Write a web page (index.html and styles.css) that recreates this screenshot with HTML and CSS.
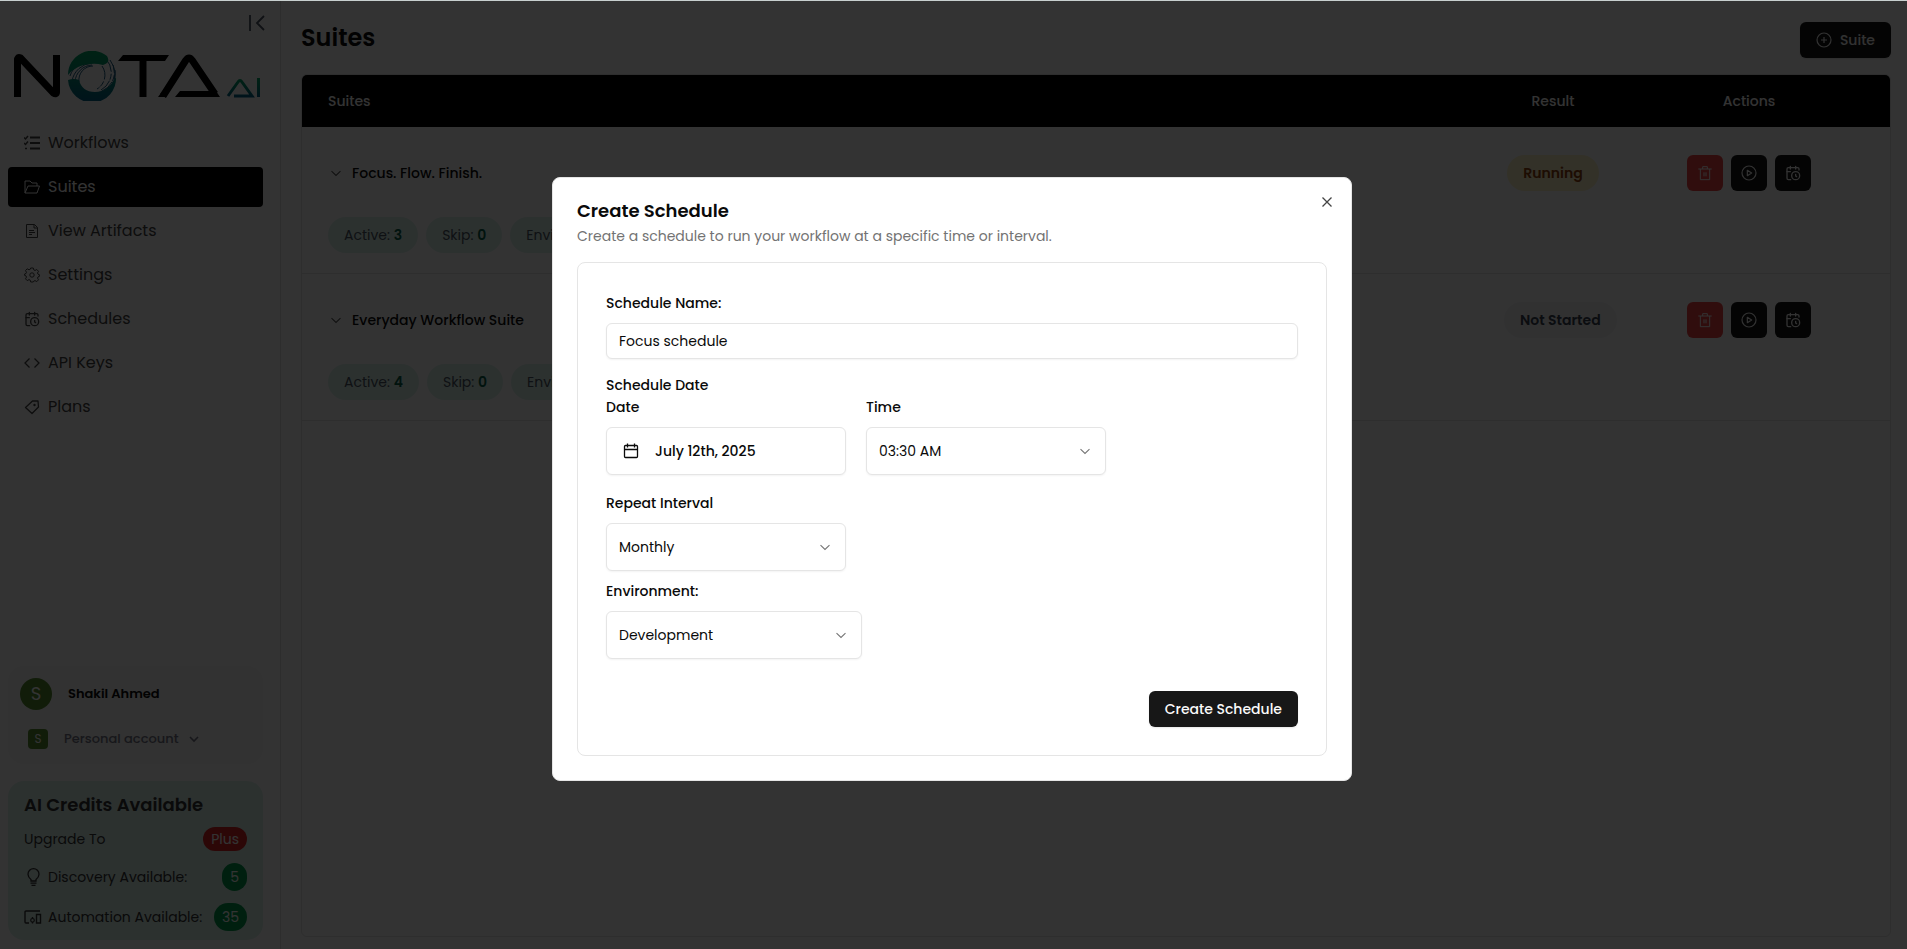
FILE: index.html
```html
<!doctype html>
<html lang="en">
	<head>
		<meta charset="utf-8" />
		<title>Suites</title>
		<link rel="stylesheet" href="styles.css">
	</head>

	<body>
		<!-- shared icons -->
		<svg class="sprite" aria-hidden="true">
			<symbol id="i-chevron" viewBox="0 0 15 15">
				<path d="M3.3 5.8 7.5 9.8 11.7 5.8" fill="none" stroke="currentColor" />
			</symbol>
			<symbol id="i-calendar-clock" viewBox="0 0 24 24">
				<g fill="none" stroke="currentColor" stroke-width="2" stroke-linecap="round" stroke-linejoin="round">
					<path d="M21 7.5V6a2 2 0 0 0-2-2H5a2 2 0 0 0-2 2v14a2 2 0 0 0 2 2h3.5" />
					<path d="M16 2v4M8 2v4M3 10h5M17.500 17.500 16 16.300V14" />
					<circle cx="16" cy="16" r="6" />
				</g>
			</symbol>
			<symbol id="i-trash" viewBox="0 0 24 24">
				<path d="M2 6h20M5 6v16h14V6M8.500 6V2.500h7V6M10.500 11v6M13.500 11v6" fill="none" stroke="currentColor" stroke-width="1.500" stroke-linejoin="round" />
			</symbol>
			<symbol id="i-play" viewBox="0 0 24 24">
				<g fill="none" stroke="currentColor" stroke-width="1.800" stroke-linejoin="round">
					<circle cx="12" cy="12" r="10.500" />
					<path d="m9.500 8 6.500 4-6.500 4z" />
				</g>
			</symbol>
		</svg>

		<div class="app">
			<aside class="sidebar">
				<button class="collapse" aria-label="Collapse sidebar">
					<svg width="16" height="16" viewBox="0 0 16 16"><path d="M1 0v16M15 1 8 8l7 7" fill="none" stroke="currentColor" stroke-width="1.800" /></svg>
				</button>

				<svg class="logo" viewBox="0 0 246 50" role="img" aria-label="Nota AI">
					<defs>
						<linearGradient id="ring" x1="0" y1="0" x2="0" y2="1">
							<stop offset="0" stop-color="#00a866" />
							<stop offset="0.4" stop-color="#009070" />
							<stop offset="1" stop-color="#006088" />
						</linearGradient>
					</defs>
					<g fill="none" stroke="#000" stroke-width="7" stroke-linejoin="round">
						<path d="M3.500 46V8q1-2 3-1l33 35q3 2 3-1V4" />
						<path d="M129 8v38" />
						<path d="M149 45 172 9q3-4 6 0l23 34" />
					</g>
					<path d="M104 10l5-6h46l-4 6zM144 46h8l2-4h-7zM161 46l5-6h36l4 6z" fill="#000" />
					<g fill="none" stroke="#1c5c80" stroke-width="1">
						<path d="M58 30a22 22 0 0 1 20-18M61 31a18 18 0 0 1 17-17M56 25a20 20 0 0 1 10-12M65 31a14 14 0 0 1 14-16" />
						<path d="M96 9a20 20 0 0 1-8 31M92 8a20 20 0 0 1-5 31M99 14a20 20 0 0 1-8 26M88 15a16 16 0 0 1-5 23" stroke-dasharray="14 2 6 1" />
						<path d="M101 19a20 20 0 0 1-8 20" />
					</g>
					<path d="M54 24A24 24 0 0 1 93 5q4 7-4 9-7-2-13-1-14 1-22 11zM102 26A24 24 0 0 1 54 29q6-2 11 0 3 12 16 12 13 0 21-15z" fill="url(#ring)" />
					<path d="M214 45l10-14q2-3 4 0l10 14h-18M244.500 27v19" fill="none" stroke="url(#ring)" stroke-width="3" />
				</svg>

				<nav class="menu">
					<a href="#">
						<svg viewBox="0 0 16 16"><path d="M6 2.500h10M6 8h10M6 13.500h10" stroke="currentColor" stroke-width="1.800" /><path d="m0 2.500 1.500 1.500L4 1M0 8l1.500 1.500L4 6.500M1 13.500h2" fill="none" stroke="currentColor" stroke-width="1.500" /></svg>
						Workflows
					</a>
					<a href="#" class="active">
						<svg viewBox="0 0 16 16"><path d="M1 14V2h5l2 2h5v3M1 14l3-7h11.500L13 14z" fill="none" stroke="currentColor" stroke-linejoin="round" /></svg>
						Suites
					</a>
					<a href="#">
						<svg viewBox="0 0 16 16"><path d="M2.500 1.500h8l3 3v10h-11zM10 1.500V5h3.500M5 7.500h5M5 9.500h6M5 11.500h3" fill="none" stroke="currentColor" stroke-linejoin="round" /></svg>
						View Artifacts
					</a>
					<a href="#">
						<svg viewBox="0 0 16 16"><path d="M6.700 1h2.600l.5 1.900 1.200.6 1.800-1 1.700 1.800-1 1.700.5 1.200 1.400.5v1.700l-1.400.5-.5 1.200 1 1.700-1.700 1.800-1.800-1-1.200.5L9.300 15H6.700l-.5-1.900-1.200-.5-1.800 1-1.700-1.800 1-1.700L2 8.900.6 8.400V7L2 6.500l.5-1.200-1-1.700 1.700-1.800 1.800 1 1.200-.5z" fill="none" stroke="currentColor" stroke-linejoin="round" /><circle cx="8" cy="8" r="2.200" fill="none" stroke="currentColor" /></svg>
						Settings
					</a>
					<a href="#"><svg><use href="#i-calendar-clock" /></svg>Schedules</a>
					<a href="#">
						<svg viewBox="0 0 16 16"><path d="M5.500 3.500 1 8l4.500 4.500M10.500 3.500 15 8l-4.500 4.500" fill="none" stroke="currentColor" stroke-width="1.300" /></svg>
						API Keys
					</a>
					<a href="#">
						<svg viewBox="0 0 16 16"><path d="M8.500 2H14l.5 6L8 14.500 1.500 8.500z" fill="none" stroke="currentColor" stroke-width="1.300" stroke-linejoin="round" /><circle cx="10.500" cy="6" r="1.200" fill="currentColor" /></svg>
						Plans
					</a>
				</nav>

				<div class="account">
					<div class="user">
						<span class="avatar">S</span>
						<strong>Shakil Ahmed</strong>
					</div>
					<button class="switcher">
						<span class="badge">S</span>
						Personal account
						<svg width="12" height="12" viewBox="0 0 12 12"><path d="m2 4 4 4 4-4" fill="none" stroke="currentColor" stroke-width="1.600" /></svg>
					</button>
				</div>

				<div class="credits">
					<h2>AI Credits Available</h2>
					<div class="credit upgrade">
						<span>Upgrade To</span>
						<a href="#" class="plus">Plus</a>
					</div>
					<div class="credit">
						<svg viewBox="0 0 18 18"><path d="M7 13v-1.500C4.500 9.500 4 8 4 6.200a5.500 5.500 0 0 1 11 0c0 1.800-.5 3.300-3 5.300V13zM6.500 15.200h6M7.500 17.300h4" fill="none" stroke="currentColor" stroke-width="1.300" /></svg>
						<span>Discovery Available:</span>
						<span class="count">5</span>
					</div>
					<div class="credit">
						<svg viewBox="0 0 18 18"><path d="M16 3H2q-1 0-1 1v10q0 1 1 1h3M12.500 6.500h4V15h-4z" fill="none" stroke="currentColor" stroke-width="1.400" /><path d="M8.500 9v1.500M8.500 14v1.500" stroke="currentColor" stroke-width="1.400" /><circle cx="8.500" cy="12.300" r="1.800" fill="none" stroke="currentColor" stroke-width="1.200" /></svg>
						<span>Automation Available:</span>
						<span class="count">35</span>
					</div>
				</div>
			</aside>

			<main class="main">
				<header class="topbar">
					<h1>Suites</h1>
					<button class="btn">
						<svg width="16" height="16" viewBox="0 0 16 16"><g fill="none" stroke="currentColor" stroke-width="1.200"><circle cx="8" cy="8" r="7" /><path d="M8 5v6M5 8h6" /></g></svg>
						Suite
					</button>
				</header>

				<div class="panel">
					<table class="suites">
						<colgroup>
							<col />
							<col class="col-result" />
							<col class="col-actions" />
						</colgroup>
						<thead>
							<tr>
								<th>Suites</th>
								<th>Result</th>
								<th>Actions</th>
							</tr>
						</thead>
						<tbody>
							<tr>
								<td>
									<div class="suite-name"><svg><use href="#i-chevron" /></svg>Focus. Flow. Finish.</div>
									<div class="chips">
										<span class="chip">Active: <b>3</b></span>
										<span class="chip">Skip: <b>0</b></span>
										<span class="chip">Environment: <b>Development</b></span>
									</div>
								</td>
								<td><span class="status running">Running</span></td>
								<td>
									<div class="actions">
										<button class="icon-btn delete" aria-label="Delete"><svg><use href="#i-trash" /></svg></button>
										<button class="icon-btn" aria-label="Run"><svg><use href="#i-play" /></svg></button>
										<button class="icon-btn" aria-label="Schedule"><svg><use href="#i-calendar-clock" /></svg></button>
									</div>
								</td>
							</tr>
							<tr>
								<td>
									<div class="suite-name"><svg><use href="#i-chevron" /></svg>Everyday Workflow Suite</div>
									<div class="chips">
										<span class="chip">Active: <b>4</b></span>
										<span class="chip">Skip: <b>0</b></span>
										<span class="chip">Environment: <b>Development</b></span>
									</div>
								</td>
								<td><span class="status">Not Started</span></td>
								<td>
									<div class="actions">
										<button class="icon-btn delete" aria-label="Delete"><svg><use href="#i-trash" /></svg></button>
										<button class="icon-btn" aria-label="Run"><svg><use href="#i-play" /></svg></button>
										<button class="icon-btn" aria-label="Schedule"><svg><use href="#i-calendar-clock" /></svg></button>
									</div>
								</td>
							</tr>
						</tbody>
					</table>
				</div>
			</main>
		</div>

		<div class="overlay">
			<div class="modal" role="dialog" aria-modal="true" aria-labelledby="modal-title">
				<button class="close" aria-label="Close">
					<svg width="16" height="16" viewBox="0 0 16 16"><path d="m3.500 3.500 9 9M12.500 3.500l-9 9" stroke="currentColor" stroke-width="1.300" /></svg>
				</button>
				<h2 id="modal-title">Create Schedule</h2>
				<p>Create a schedule to run your workflow at a specific time or interval.</p>

				<form class="form">
					<label for="name">Schedule Name:</label>
					<input type="text" id="name" value="Focus schedule" />

					<div class="group-title">Schedule Date</div>
					<div class="date-row">
						<div class="field">
							<label for="date">Date</label>
							<button type="button" id="date" class="control date">
								<svg width="16" height="16" viewBox="0 0 16 16"><path d="M1.500 3.500q0-1 1-1h11q1 0 1 1v10q0 1-1 1h-11q-1 0-1-1zM1.500 6.500h13M4.500.500v4M11.500.500v4" fill="none" stroke="currentColor" stroke-width="1.300" /></svg>
								July 12th, 2025
							</button>
						</div>
						<div class="field">
							<label for="time">Time</label>
							<div class="select">
								<select id="time" class="control">
									<option>03:30 AM</option>
								</select>
								<svg><use href="#i-chevron" /></svg>
							</div>
						</div>
					</div>

					<div class="field repeat">
						<label for="repeat">Repeat Interval</label>
						<div class="select">
							<select id="repeat" class="control">
								<option>Monthly</option>
							</select>
							<svg><use href="#i-chevron" /></svg>
						</div>
					</div>

					<div class="field environment">
						<label for="environment">Environment:</label>
						<div class="select">
							<select id="environment" class="control">
								<option>Development</option>
							</select>
							<svg><use href="#i-chevron" /></svg>
						</div>
					</div>

					<div class="form-footer">
						<button type="submit" class="btn">Create Schedule</button>
					</div>
				</form>
			</div>
		</div>
	</body>
</html>
```

FILE: styles.css
```css
:root {
	--ink: #0a0a0a;
	--dark: #171717;
	--muted: #737373;
	--border: #e5e5e5;
	--mint: #dcf2ec;
}

* {
	box-sizing: border-box;
}

body {
	margin: 0;
	font-family: Poppins, Inter, "Noto Sans", sans-serif;
	font-size: 14px;
	line-height: 20px;
	color: var(--ink);
	background: #fff;
}

h1,
h2,
p {
	margin: 0;
}

button,
input,
select {
	font: inherit;
	color: inherit;
}

button {
	padding: 0;
	border: none;
	background: none;
	cursor: pointer;
}

svg {
	flex-shrink: 0;
}

.sprite {
	position: absolute;
	width: 0;
	height: 0;
}

.app {
	display: flex;
	height: 100vh;
	border-top: 1px solid #c8d0cf;
}

/* sidebar */
.sidebar {
	display: flex;
	flex-direction: column;
	width: 281px;
	padding: 14px 17px 9px 8px;
	border-right: 1px solid #e0e0e0;
}

.collapse {
	align-self: flex-end;
	height: 16px;
	margin-right: -2px;
	color: #4b5563;
}

.logo {
	width: 246px;
	height: 50px;
	margin: 20px 0 22px 6px;
}

.menu {
	display: flex;
	flex-direction: column;
	gap: 4px;
	font-size: 16px;
	line-height: 24px;
	color: #444;
}

.menu a {
	display: flex;
	align-items: center;
	gap: 8px;
	padding: 8px 16px;
	border-radius: 4px;
	color: inherit;
	text-decoration: none;
}

.menu svg {
	width: 16px;
	height: 16px;
}

.menu .active {
	color: #fff;
	background: #000;
}

.account {
	margin-top: auto;
	padding: 12px;
	border-radius: 16px;
	background: #f7f7f7;
}

.user {
	display: flex;
	align-items: center;
	gap: 16px;
	font-size: 13px;
}

.user strong {
	font-weight: 600;
}

.avatar {
	width: 32px;
	height: 32px;
	border-radius: 50%;
	font-size: 18px;
	line-height: 32px;
	text-align: center;
	color: #fff;
	background: #558b2f;
}

.switcher {
	display: flex;
	align-items: center;
	gap: 10px;
	margin: 19px 0 0 8px;
	padding-bottom: 3px;
	font-size: 13px;
	font-weight: 500;
	color: #747686;
}

.badge {
	width: 20px;
	height: 20px;
	margin-right: 6px;
	border-radius: 4px;
	font-size: 12px;
	font-weight: 400;
	color: #fff;
	background: #558b2f;
}

.credits {
	margin-top: 17px;
	padding: 12px 16px 9px;
	border-radius: 16px;
	color: #333;
	background: var(--mint);
}

.credits h2 {
	font-size: 18px;
	line-height: 24px;
	font-weight: 600;
}

.credit {
	display: flex;
	align-items: center;
	gap: 6px;
	min-height: 28px;
	margin-bottom: 12px;
}

.credit:last-child {
	margin-bottom: 0;
}

.credit svg {
	width: 18px;
	height: 18px;
}

.upgrade {
	margin: 8px 0 10px;
}

.plus,
.count {
	margin-left: auto;
	padding: 4px 8px;
	border-radius: 14px;
	color: #fff;
	background: #009c4c;
}

.plus {
	padding: 2px 8px;
	text-decoration: none;
	background: #dc2626;
}

/* main */
.main {
	display: flex;
	flex: 1;
	flex-direction: column;
	min-width: 0;
	padding: 21px 16px 12px 20px;
}

.topbar {
	display: flex;
	align-items: flex-start;
	justify-content: space-between;
	margin-bottom: 16px;
}

h1 {
	font-size: 24px;
	line-height: 32px;
	font-weight: 600;
}

.btn {
	display: flex;
	align-items: center;
	gap: 8px;
	height: 36px;
	padding: 0 16px;
	border-radius: 6px;
	font-weight: 500;
	color: #fafafa;
	background: var(--dark);
	box-shadow: 0 1px 2px rgba(0, 0, 0, 0.1);
}

.panel {
	flex: 1;
	border: 1px solid var(--border);
	border-radius: 6px;
	overflow: hidden;
}

.suites {
	width: 100%;
	border-collapse: collapse;
	table-layout: fixed;
}

.col-result {
	width: 162px;
}

.col-actions {
	width: 256px;
}

th {
	height: 52px;
	padding: 0 26px;
	font-weight: 500;
	color: #fff;
	background: #000;
}

th:first-child {
	text-align: left;
}

td {
	padding: 28px 32px;
	text-align: center;
	vertical-align: top;
}

td:first-child {
	padding: 28px 26px 20px;
	text-align: left;
}

/* the last column keeps its buttons clear of the panel edge */
th:last-child,
td:last-child {
	padding-right: 26px;
	padding-left: 0;
}

tbody tr {
	border-bottom: 1px solid var(--border);
}

.suite-name {
	display: flex;
	align-items: center;
	gap: 8px;
	height: 36px;
	font-weight: 500;
}

.suite-name svg {
	width: 16px;
	height: 16px;
	color: #555;
}

.chips {
	display: flex;
	gap: 8px;
	margin-top: 26px;
}

.chip {
	padding: 8px 16px;
	border-radius: 18px;
	white-space: nowrap;
	color: #4b5563;
	background: var(--mint);
}

.chip b {
	font-weight: 600;
	color: #065f46;
}

.status {
	display: inline-block;
	padding: 8px 16px;
	border-radius: 18px;
	font-weight: 600;
	white-space: nowrap;
	color: #374151;
	background: #f3f4f6;
}

.status.running {
	color: #92400e;
	background: #fef3c7;
}

.actions {
	display: flex;
	justify-content: center;
	gap: 8px;
}

.icon-btn {
	display: flex;
	align-items: center;
	justify-content: center;
	width: 36px;
	height: 36px;
	border-radius: 6px;
	color: #fafafa;
	background: var(--dark);
}

.icon-btn.delete {
	background: #ef4444;
}

.icon-btn svg {
	width: 16px;
	height: 16px;
}

/* dialog */
.overlay {
	position: fixed;
	inset: 1px 0 0;
	display: flex;
	align-items: center;
	justify-content: center;
	padding: 16px 11px 8px 8px;
	background: rgba(0, 0, 0, 0.8);
}

.modal {
	position: relative;
	width: 800px;
	max-width: 100%;
	padding: 24px;
	border: 1px solid var(--border);
	border-radius: 8px;
	background: #fff;
}

.modal h2 {
	font-size: 18px;
	line-height: 18px;
	font-weight: 600;
}

.modal p {
	margin: 6px 0 16px;
	color: var(--muted);
}

.close {
	position: absolute;
	top: 16px;
	right: 16px;
	height: 16px;
	color: #444;
}

.form {
	display: flex;
	flex-direction: column;
	padding: 28px;
	border: 1px solid var(--border);
	border-radius: 8px;
}

.form label,
.group-title {
	display: block;
	font-weight: 500;
	line-height: 24px;
}

.form input,
.control {
	border: 1px solid var(--border);
	border-radius: 6px;
	background: #fff;
	box-shadow: 0 1px 2px rgba(0, 0, 0, 0.05);
}

.form input {
	height: 36px;
	margin: 8px 0 16px;
	padding: 0 12px;
}

.group-title {
	line-height: 20px;
}

.date-row {
	display: flex;
	gap: 20px;
}

.field {
	width: 240px;
}

.control {
	width: 100%;
	height: 48px;
	margin-top: 8px;
	padding: 0 12px;
	appearance: none;
}

.date {
	display: flex;
	align-items: center;
	gap: 16px;
	padding: 0 16px;
	font-weight: 500;
}

.select {
	position: relative;
}

.select svg {
	position: absolute;
	right: 13px;
	bottom: 16px;
	width: 16px;
	height: 16px;
	color: var(--muted);
	pointer-events: none;
}

.repeat {
	margin-top: 16px;
}

.environment {
	width: 256px;
	margin-top: 8px;
}

.form-footer {
	display: flex;
	justify-content: flex-end;
	margin-top: 32px;
}
```
